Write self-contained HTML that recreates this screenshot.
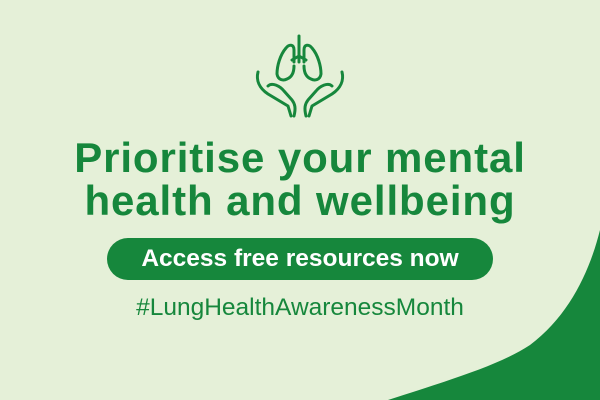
<!DOCTYPE html>
<html><head><style>
html,body{margin:0;padding:0}
body{width:600px;height:400px;background:#e5f0d8;position:relative;overflow:hidden;font-family:"Liberation Sans",sans-serif}
.h{position:absolute;left:0;width:600px;text-align:center;color:#16873c;font-weight:bold;font-size:42px;letter-spacing:0.9px;line-height:48px}
.btn{position:absolute;left:107px;top:238px;width:386px;height:42px;border-radius:21px;background:#16873c;color:#fff;font-weight:bold;font-size:24.5px;text-align:center;line-height:42px}
.tag{position:absolute;left:0;width:600px;top:294px;text-align:center;color:#16873c;font-size:24.5px}
</style></head><body>
<svg width="600" height="400" style="position:absolute;left:0;top:0">
<path d="M388 400 C450 380 500 365 530 345 C570 315 590 270 600 230 L600 400 Z" fill="#16873c"/>
<g fill="none" stroke="#16873c" stroke-width="3" stroke-linecap="round" stroke-linejoin="round">
<path d="M299 36 V62 M292 60 L299 56 L306 60"/>
<path d="M294 62 V50 C294 44 289 44 286 48 C280 55 277 66 277 74 C278 80 283 81 287 79 C292 77 294 72 294 66"/>
<path d="M304 62 V50 C304 44 309 44 312 48 C318 55 321 66 321 74 C320 80 315 81 311 79 C306 77 304 72 304 66"/>
<path d="M258 72 C256 80 259 88 268 94 L288 106 L291 116 M268 86 C272 82 280 86 284 91 L292 100 C295 104 296 108 294 116"/>
<path d="M342 72 C344 80 341 88 332 94 L312 106 L309 116 M332 86 C328 82 320 86 316 91 L308 100 C305 104 304 108 306 116"/>
</g>
</svg>
<div class="h" style="top:134px">Prioritise your mental</div>
<div class="h" style="top:177px">health and wellbeing</div>
<div class="btn">Access free resources now</div>
<div class="tag">#LungHealthAwarenessMonth</div>
</body></html>
